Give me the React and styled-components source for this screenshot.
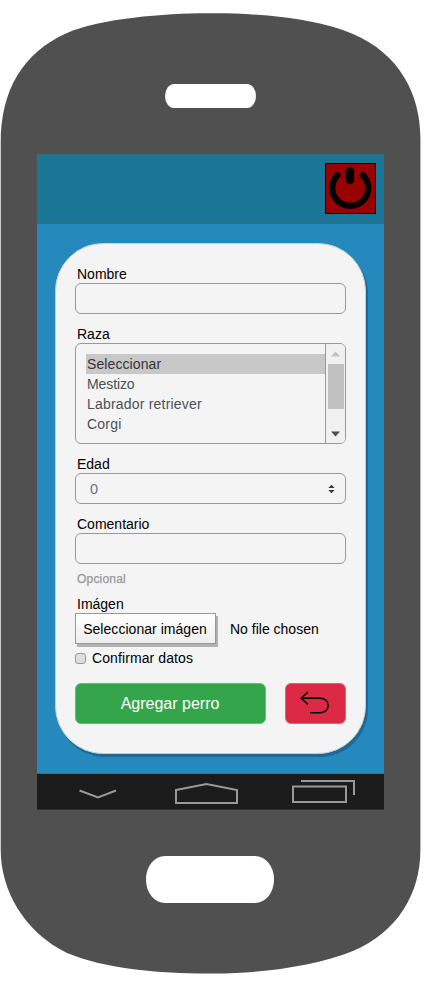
import React from "react";
import styled, { createGlobalStyle, css } from "styled-components";

const GlobalStyle = createGlobalStyle`
  * { box-sizing: border-box; }
  body { margin: 0; background: #fff; font-family: "Liberation Sans", Arial, sans-serif; }
`;

const Phone = styled.main`
  width: 425px;
  height: 984px;
  padding-left: 37px;
  display: flex;
  flex-direction: column;
  background: #505050;
  clip-path: path("M.7 143C.7 90 23 52.5 67 33C100 18.5 165 13.3 207 13.3H215C262 13.3 318 19 353 34C400 54 420.4 95 420.4 138V850C420.4 893 398 932 353 951C315 966 262 973.5 215 973.5H207C160 973.5 105 969 67 953C24 932 .7 890 .7 850Z");
`;

const Speaker = styled.div`
  width: 91px;
  height: 23.5px;
  margin: 84px 0 46.5px 128px;
  flex: none;
  background: #fff;
  border-radius: 9px / 12px;
`;

const HomeButton = styled.div`
  width: 128px;
  height: 47px;
  margin: 46.5px 0 0 109.3px;
  flex: none;
  background: #fff;
  border-radius: 19px / 23px;
`;

const Screen = styled.div`
  width: 347px;
  height: 655.5px;
  flex: none;
  display: flex;
  flex-direction: column;
  background: #2589be;
`;

const Header = styled.header`
  height: 70px;
  padding: 8px 8px 0;
  display: flex;
  justify-content: flex-end;
  background: #1a7596;
  border-top: 1px solid #2b7089;
  border-bottom: 1px solid #306b80;
`;

const PowerButton = styled.button`
  width: 51px;
  height: 51px;
  padding: 0;
  border: 1px solid #000;
  background: #900;
  svg { display: block; }
`;

const Card = styled.form`
  width: 311px;
  height: 511px;
  margin: 19px 0 19px 18px;
  padding: 23px 19px 0;
  border: 1px solid #c5ced3;
  border-radius: 48px;
  background: #f4f4f4;
  box-shadow: 2px 3px 0 #1b6a95;
`;

const Field = styled.div`
  height: ${(p) => p.$height}px;
`;

const Label = styled.label`
  display: block;
  height: 16px;
  padding-left: 2px;
  font-size: 14px;
  line-height: 14px;
  color: #000;
`;

const box = css`
  width: 271px;
  border: 1px solid #999;
  border-radius: 6px;
  background: #f4f4f4;
`;

const Input = styled.input`
  ${box}
  display: block;
  height: 31px;
  padding: 0 14px;
  outline: none;
`;

const Listbox = styled.div`
  ${box}
  height: 101px;
  display: flex;
  overflow: hidden;
`;

const Options = styled.div`
  flex: 1;
  padding: 10px 0 0 10px;
`;

const Option = styled.div`
  height: 20px;
  padding-left: 1px;
  line-height: 20px;
  font-size: 14px;
  letter-spacing: ${(p) => (p.$selected ? 0.1 : p.$spacing ?? 0.2)}px;
  color: ${(p) => (p.$selected ? "#333" : "#495057")};
  background: ${(p) => (p.$selected ? "#c8c8c8" : "transparent")};
`;

const Scrollbar = styled.div`
  width: 20px;
  border-left: 1px solid #999;
  display: flex;
  flex-direction: column;
  align-items: center;
  background: #f1f1f1;
  svg { display: block; flex: none; }
`;

const Thumb = styled.div`
  width: 16px;
  height: 45px;
  margin-bottom: 16px;
  background: #c1c1c1;
`;

const Select = styled.div`
  ${box}
  height: 31px;
  padding: 0 10px 0 14px;
  display: flex;
  align-items: center;
  justify-content: space-between;
  font-size: 14.5px;
  color: #6c757d;
`;

const Hint = styled.div`
  height: 33px;
  padding: 9px 0 0 2px;
  line-height: 13px;
  font-size: 12px;
  letter-spacing: 0.2px;
  -webkit-text-stroke: 0.25px #999;
  color: #999;
`;

const FileRow = styled.div`
  display: flex;
  align-items: center;
  gap: 14px;
  font-size: 14px;
`;

const FileButton = styled.button`
  width: 141px;
  height: 31px;
  padding: 0 1px 0 0;
  border: 1px solid #999;
  background: linear-gradient(#fff, #eee);
  box-shadow: 2px 3px 0 #b2b2b2;
  font: 14px "Liberation Sans", Arial, sans-serif;
  letter-spacing: 0.04px;
  color: #000;
`;

const CheckRow = styled.label`
  height: 39px;
  padding-top: 9px;
  display: flex;
  align-items: flex-start;
  gap: 6px;
  font-size: 14px;
  line-height: 10px;
  letter-spacing: 0.1px;
`;

const Checkbox = styled.input`
  appearance: none;
  width: 11px;
  height: 11px;
  margin: 0;
  border: 1px solid #999;
  border-radius: 3px;
  background: #dedede;
`;

const Actions = styled.div`
  display: flex;
  gap: 19px;
`;

const Action = styled.button`
  width: ${(p) => p.$width}px;
  height: 41px;
  padding: 0 1px 0 0;
  display: grid;
  place-items: center;
  border: 1px solid ${(p) => p.$edge};
  border-radius: 6px;
  background: ${(p) => p.$color};
  color: #fff;
  font: 16px "Liberation Sans", Arial, sans-serif;
  svg { margin-top: -1px; }
`;

const NavBar = styled.nav`
  height: 36.5px;
  background: #1b1b1b;
  border-top: 1px solid #50646e;
  border-bottom: 1px solid #303030;
  svg { display: block; margin-top: -1px; }
`;

const breeds = ["Seleccionar", "Mestizo", "Labrador retriever", "Corgi"];

export default function App() {
  return (
    <>
      <GlobalStyle />
      <Phone>
        <Speaker />
        <Screen>
          <Header>
            <PowerButton type="button" aria-label="Salir">
              <svg width="49" height="49" fill="none" stroke="#000" strokeLinecap="round">
                <path d="M11.5 11.2A18 18 0 1 0 37 11.2" strokeWidth="6.2" />
                <path d="M24 7.4V16" strokeWidth="8.3" />
              </svg>
            </PowerButton>
          </Header>
          <Card>
            <Field $height={60}>
              <Label>Nombre</Label>
              <Input />
            </Field>
            <Field $height={130}>
              <Label>Raza</Label>
              <Listbox>
                <Options>
                  {breeds.map((b, i) => (
                    <Option key={b} $selected={i === 0} $spacing={b === "Mestizo" ? -0.1 : undefined}>{b}</Option>
                  ))}
                </Options>
                <Scrollbar>
                  <svg width="17" height="20"><path d="M4 12.5L8.5 7.5L13 12.5Z" fill="#c1c1c1" /></svg>
                  <Thumb />
                  <svg width="17" height="18"><path d="M4 6.5H13L8.5 11.5Z" fill="#505050" /></svg>
                </Scrollbar>
              </Listbox>
            </Field>
            <Field $height={60}>
              <Label>Edad</Label>
              <Select>
                0
                <svg width="7" height="10" fill="#343a40"><path d="M0.3 4L3.5 0.8L6.7 4ZM0.3 6L3.5 9.2L6.7 6Z" /></svg>
              </Select>
            </Field>
            <Field $height={47}>
              <Label>Comentario</Label>
              <Input />
            </Field>
            <Hint>Opcional</Hint>
            <Label>Imágen</Label>
            <FileRow>
              <FileButton type="button">Seleccionar imágen</FileButton>
              <span>No file chosen</span>
            </FileRow>
            <CheckRow>
              <Checkbox type="checkbox" />
              Confirmar datos
            </CheckRow>
            <Actions>
              <Action type="button" $width={191} $color="#35a54b" $edge="#67bb78">Agregar perro</Action>
              <Action type="button" $width={61} $color="#dc2a44" $edge="#e5607a" aria-label="Volver">
                <svg width="30" height="24" fill="none" stroke="#000" strokeWidth="1.5">
                  <path d="M8 1L1.2 7.3L8 13.5M1.2 7.3H20C31 7.3 31 21.7 20 21.7H10" />
                </svg>
              </Action>
            </Actions>
          </Card>
          <NavBar>
            <svg width="347" height="36" fill="none" stroke="#999" strokeWidth="2">
              <path d="M42.5 17.5L61 24.5L79 17.5" />
              <path d="M139 17L169.5 11L200 17V30H139Z" />
              <path d="M256 13.5H309V29H256ZM264 8H317V22" />
            </svg>
          </NavBar>
        </Screen>
        <HomeButton />
      </Phone>
    </>
  );
}
